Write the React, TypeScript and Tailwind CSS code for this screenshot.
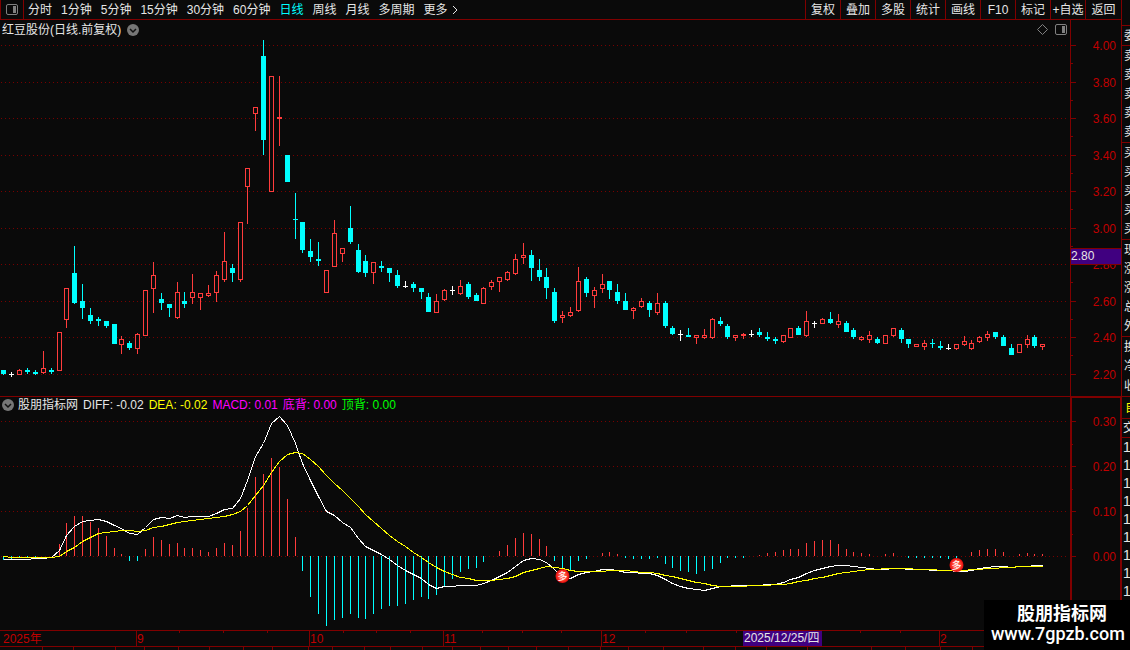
import * as React from "react";

type Tone = "up" | "down" | "flat";
type Candle = [tone: Tone, high: number, top: number, bottom: number, low: number];

const TONE_COLOR: Record<Tone, string> = {
  up: "#ff3c3c",
  down: "#00ffff",
  flat: "#ffffff",
};

const PERIODS = [
  "分时",
  "1分钟",
  "5分钟",
  "15分钟",
  "30分钟",
  "60分钟",
  "日线",
  "周线",
  "月线",
  "多周期",
];

const TOOLS = ["复权", "叠加", "多股", "统计", "画线", "F10", "标记", "+自选", "返回"];

// Drawn position of each trading day: tone, high, body top, body bottom, low.
const CANDLES: Candle[] = [
  ["down", 370, 370, 374, 375],
  ["flat", 372, 374, 375, 377],
  ["up", 369, 370, 375, 375],
  ["down", 368, 370, 372, 374],
  ["down", 370, 372, 374, 375],
  ["up", 351, 368, 373, 374],
  ["down", 368, 370, 372, 374],
  ["up", 332, 332, 371, 371],
  ["up", 288, 288, 320, 328],
  ["down", 246, 273, 303, 304],
  ["down", 284, 301, 308, 319],
  ["down", 308, 315, 321, 324],
  ["down", 317, 319, 321, 326],
  ["down", 321, 321, 326, 328],
  ["down", 324, 324, 344, 344],
  ["up", 336, 339, 345, 354],
  ["down", 341, 343, 348, 350],
  ["up", 333, 334, 349, 354],
  ["up", 290, 290, 336, 336],
  ["up", 262, 275, 289, 313],
  ["down", 293, 299, 303, 310],
  ["down", 304, 304, 308, 317],
  ["up", 282, 292, 318, 319],
  ["down", 292, 301, 304, 308],
  ["up", 274, 292, 298, 304],
  ["up", 293, 293, 298, 310],
  ["up", 285, 293, 296, 297],
  ["up", 271, 275, 293, 302],
  ["up", 232, 261, 280, 282],
  ["down", 264, 268, 273, 282],
  ["up", 222, 222, 280, 282],
  ["up", 168, 168, 187, 224],
  ["up", 107, 107, 114, 131],
  ["down", 40, 56, 140, 155],
  ["up", 76, 76, 192, 192],
  ["up", 76, 117, 119, 146],
  ["down", 155, 155, 182, 182],
  ["down", 193, 219, 220, 239],
  ["down", 222, 222, 250, 253],
  ["down", 239, 251, 257, 262],
  ["down", 242, 259, 261, 266],
  ["up", 270, 270, 293, 293],
  ["up", 220, 233, 267, 267],
  ["up", 248, 248, 254, 262],
  ["down", 206, 228, 242, 244],
  ["down", 244, 250, 272, 273],
  ["down", 255, 261, 273, 277],
  ["up", 262, 262, 273, 284],
  ["down", 261, 266, 268, 272],
  ["down", 268, 268, 273, 282],
  ["down", 270, 275, 286, 288],
  ["flat", 281, 286, 287, 288],
  ["down", 282, 284, 288, 292],
  ["down", 288, 288, 292, 299],
  ["down", 293, 297, 312, 312],
  ["up", 294, 301, 313, 313],
  ["up", 289, 290, 300, 301],
  ["flat", 286, 290, 291, 295],
  ["up", 280, 286, 294, 295],
  ["down", 282, 284, 297, 299],
  ["down", 293, 295, 301, 301],
  ["up", 287, 288, 304, 304],
  ["up", 280, 282, 287, 290],
  ["up", 277, 277, 282, 292],
  ["up", 271, 272, 280, 281],
  ["up", 254, 259, 274, 275],
  ["up", 243, 255, 258, 264],
  ["down", 250, 255, 268, 281],
  ["down", 259, 270, 277, 281],
  ["down", 268, 277, 288, 299],
  ["down", 288, 292, 321, 323],
  ["up", 311, 315, 318, 323],
  ["up", 307, 312, 316, 317],
  ["up", 267, 281, 311, 312],
  ["down", 277, 279, 293, 297],
  ["up", 287, 290, 296, 308],
  ["up", 274, 284, 289, 293],
  ["down", 281, 281, 290, 299],
  ["down", 284, 292, 301, 304],
  ["down", 293, 301, 310, 310],
  ["up", 307, 308, 311, 319],
  ["up", 298, 301, 307, 308],
  ["down", 301, 303, 310, 317],
  ["up", 293, 303, 313, 315],
  ["down", 301, 303, 326, 328],
  ["down", 326, 328, 334, 335],
  ["flat", 330, 334, 335, 341],
  ["down", 328, 335, 337, 337],
  ["up", 335, 335, 338, 344],
  ["up", 329, 335, 338, 339],
  ["up", 318, 319, 338, 339],
  ["down", 317, 321, 324, 326],
  ["down", 324, 326, 337, 339],
  ["up", 335, 335, 338, 341],
  ["up", 333, 334, 336, 339],
  ["flat", 330, 334, 335, 337],
  ["down", 328, 332, 335, 337],
  ["down", 332, 337, 339, 341],
  ["down", 337, 339, 341, 344],
  ["up", 335, 335, 342, 343],
  ["up", 328, 328, 338, 338],
  ["down", 326, 328, 335, 335],
  ["up", 311, 321, 336, 337],
  ["flat", 321, 323, 324, 328],
  ["up", 318, 319, 324, 324],
  ["down", 312, 319, 323, 324],
  ["up", 314, 321, 325, 328],
  ["down", 321, 323, 332, 332],
  ["down", 328, 330, 337, 339],
  ["up", 336, 337, 340, 341],
  ["up", 331, 335, 340, 343],
  ["down", 337, 339, 343, 344],
  ["up", 335, 335, 344, 344],
  ["up", 328, 328, 336, 337],
  ["down", 328, 330, 339, 343],
  ["down", 339, 339, 344, 348],
  ["up", 344, 344, 347, 347],
  ["up", 340, 343, 347, 350],
  ["down", 339, 343, 344, 348],
  ["down", 341, 346, 348, 350],
  ["flat", 344, 348, 349, 350],
  ["up", 344, 344, 349, 350],
  ["up", 336, 341, 345, 346],
  ["up", 340, 343, 349, 350],
  ["up", 336, 337, 342, 343],
  ["up", 331, 334, 338, 341],
  ["down", 332, 332, 337, 339],
  ["down", 335, 337, 346, 346],
  ["down", 344, 348, 355, 355],
  ["up", 344, 344, 353, 353],
  ["up", 335, 339, 345, 348],
  ["down", 335, 337, 346, 348],
  ["up", 344, 344, 347, 350],
];

const ZERO_Y = 556;

// End of each histogram bar; above ZERO_Y is positive.
const HISTOGRAM = [
  560, 559, 558, 558, 558, 556, 556, 544, 523, 516, 516, 522, 528, 536, 548, 554,
  561, 561, 549, 537, 540, 544, 543, 548, 548, 550, 552, 548, 543, 545, 531, 508,
  477, 474, 458, 467, 499, 537, 571, 597, 614, 626, 620, 618, 614, 618, 619, 614,
  609, 606, 606, 604, 600, 597, 599, 595, 587, 579, 572, 569, 568, 562, 556, 551,
  545, 538, 533, 534, 539, 546, 561, 568, 571, 561, 559, 556, 553, 552, 554, 558,
  559, 559, 559, 558, 564, 568, 571, 572, 574, 571, 569, 563, 558, 558, 558, 556,
  555, 553, 552, 550, 549, 549, 543, 541, 540, 540, 544, 549, 552, 553, 554, 556,
  554, 553, 556, 558, 558, 558, 558, 558, 559, 558, 556, 552, 550, 549, 549, 552,
  556, 554, 553, 554, 554,
];

const DIFF = [
  559, 559, 559, 559, 558, 558, 557, 550, 535, 526, 521, 520, 519, 521, 525, 528,
  533, 534, 527, 519, 517, 518, 515, 517, 516, 516, 516, 513, 509, 508, 498, 480,
  456, 443, 423, 416, 425, 443, 463, 480, 496, 511, 515, 522, 527, 538, 546, 550,
  554, 559, 565, 570, 574, 578, 584, 588, 586, 586, 585, 585, 585, 583, 580, 576,
  572, 566, 560, 558, 559, 562, 569, 577, 578, 574, 572, 571, 569, 569, 570, 572,
  572, 573, 573, 575, 579, 583, 586, 588, 589, 590, 588, 586, 586, 585, 585, 585,
  585, 584, 584, 582, 579, 577, 573, 570, 568, 566, 565, 565, 566, 567, 568, 569,
  569, 568, 568, 569, 569, 569, 570, 570, 570, 571, 571, 570, 568, 567, 566, 566,
  567, 566, 566, 565, 565,
];

const DEA = [
  556, 557, 557, 557, 557, 557, 557, 556, 551, 547, 541, 537, 533, 532, 531, 530,
  530, 531, 530, 527, 526, 524, 522, 521, 520, 519, 518, 517, 516, 514, 511, 505,
  495, 485, 472, 461, 454, 452, 453, 459, 466, 475, 483, 490, 498, 506, 514, 521,
  528, 535, 541, 546, 552, 557, 562, 567, 571, 574, 577, 578, 580, 580, 580, 579,
  578, 576, 572, 570, 568, 566, 567, 568, 570, 571, 571, 571, 571, 570, 570, 570,
  571, 572, 572, 573, 575, 576, 578, 580, 582, 583, 585, 586, 586, 586, 586, 585,
  585, 585, 584, 584, 583, 581, 580, 578, 577, 575, 573, 572, 571, 570, 569, 569,
  568, 568, 568, 568, 569, 569, 569, 570, 570, 570, 570, 569, 569, 568, 568, 567,
  567, 566, 566, 566, 566,
];

const PRICE_TICKS: [string, number][] = [
  ["4.00", 45],
  ["3.80", 82],
  ["3.60", 118],
  ["3.40", 155],
  ["3.20", 191],
  ["3.00", 228],
  ["2.80", 264],
  ["2.60", 301],
  ["2.40", 337],
  ["2.20", 374],
];

const MACD_TICKS: [string, number][] = [
  ["0.30", 421],
  ["0.20", 466],
  ["0.10", 511],
  ["0.00", 556],
];

const MONTHS: [string, number][] = [
  ["9", 136],
  ["10", 309],
  ["11", 443],
  ["12", 601],
  ["2", 939],
];
const WEEK_TICKS = [179, 223, 267, 343, 376, 410, 482, 522, 561, 645, 686, 736, 860, 900];
const TAB_TICKS = [
  42, 73, 115, 144, 178, 209, 243, 272, 308, 332, 364, 390, 422, 452, 480, 508, 536,
  568, 600, 628, 663, 703, 735, 766, 807, 871, 905, 940, 972,
];

const SIGNALS = [
  { x: 562, y: 576 },
  { x: 956, y: 565 },
];

const QUOTE_GROUPS = [
  { rows: ["委"], className: "h-5 pt-px" },
  { rows: ["卖", "卖", "卖", "卖", "卖"], className: "h-[97px]" },
  { rows: ["买", "买", "买", "买", "买"], className: "h-[97px]" },
  { rows: ["现", "涨", "涨", "总", "外"], className: "h-[97px]" },
  { rows: ["换", "净", "收"], className: "h-[60px]" },
];

function dayX(index: number) {
  return Math.floor(3.92 + index * 7.87);
}

function toPoints(values: number[]) {
  return values.map((y, i) => `${dayX(i) + 0.5},${y + 0.5}`).join(" ");
}

function GridLines({ ticks }: { ticks: [string, number][] }) {
  return (
    <g stroke="#780000" strokeDasharray="1 3">
      {ticks.map(([label, y]) => (
        <line key={label} x1="1" x2="1068" y1={y + 0.5} y2={y + 0.5} />
      ))}
    </g>
  );
}

function AxisTicks({ ticks, step }: { ticks: [string, number][]; step: number }) {
  return (
    <>
      {ticks.map(([label, y], i) => (
        <g key={label}>
          <rect x="0" y={y} width="5" height="1" fill="#800000" />
          {i < ticks.length - 1 ? (
            <rect x="0" y={y + step} width="2" height="1" fill="#800000" />
          ) : null}
          <text x="45" y={y + 5} textAnchor="end" fontSize="12" fill="#c00000">
            {label}
          </text>
        </g>
      ))}
    </>
  );
}

function PanelIcon({ className }: { className?: string }) {
  return (
    <svg viewBox="0 0 12 11" className={className} fill="none" aria-hidden="true">
      <rect x="0.5" y="0.5" width="11" height="10" rx="1.5" stroke="#808080" />
      <rect x="7" y="2" width="3" height="7" fill="#808080" />
    </svg>
  );
}

function CollapseButton({ label }: { label: string }) {
  return (
    <button type="button" aria-label={label} className="block h-3 w-3">
      <svg viewBox="0 0 12 12" className="h-3 w-3" aria-hidden="true">
        <circle cx="6" cy="6" r="6" fill="#767676" />
        <path d="M3 5l3 3 3-3" fill="none" stroke="#111" strokeWidth="1.5" />
      </svg>
    </button>
  );
}

function TopBar() {
  const [period, setPeriod] = React.useState("日线");

  return (
    <header className="flex h-5 items-stretch border-b border-[#800000]">
      <button
        type="button"
        aria-label="切换面板"
        className="flex w-6 items-center justify-center border-x border-[#800000]"
      >
        <PanelIcon className="h-[11px] w-3" />
      </button>
      <nav className="flex flex-1 items-center gap-[9px] whitespace-nowrap pl-1">
        {PERIODS.map((name) => (
          <button
            key={name}
            type="button"
            aria-pressed={name === period}
            onClick={() => setPeriod(name)}
            className={name === period ? "text-[#00ffff]" : "text-[#e6e6e6]"}
          >
            {name}
          </button>
        ))}
        <button type="button" className="flex items-center gap-1 text-[#e6e6e6]">
          更多
          <svg viewBox="0 0 6 10" className="h-[10px] w-[6px]" aria-hidden="true">
            <path d="M1 1l4 4-4 4" fill="none" stroke="#e6e6e6" />
          </svg>
        </button>
      </nav>
      <div className="flex whitespace-nowrap">
        {TOOLS.map((name) => (
          <button
            key={name}
            type="button"
            className="w-[35px] border-l border-[#800000] text-center text-[#e6e6e6] last:w-9"
          >
            {name}
          </button>
        ))}
      </div>
    </header>
  );
}

function PriceChart() {
  return (
    <section aria-label="红豆股份日线" className="flex h-[377px] border-b border-[#800000]">
      <div className="relative min-w-0 flex-1">
        <svg
          viewBox="0 20 1070 376"
          preserveAspectRatio="none"
          className="block h-[376px] w-full"
          shapeRendering="crispEdges"
          aria-hidden="true"
        >
          <GridLines ticks={PRICE_TICKS} />
          {CANDLES.map(([tone, high, top, bottom, low], i) => {
            const x = dayX(i);
            const color = TONE_COLOR[tone];
            return (
              <g key={i} fill={color}>
                <rect x={x} y={high} width="1" height={low - high} />
                {tone === "up" && bottom - top > 2 ? (
                  <rect
                    x={x - 1.5}
                    y={top + 0.5}
                    width="4"
                    height={bottom - top - 1}
                    fill="#0a0a0a"
                    stroke={color}
                  />
                ) : (
                  <rect x={x - 2} y={top} width="5" height={bottom - top} />
                )}
              </g>
            );
          })}
        </svg>
        <div className="absolute inset-x-0 top-0 flex h-[19px] items-center gap-[6px] pl-[2px] pr-[3px] text-[#e6e6e6]">
          <h1>红豆股份(日线.前复权)</h1>
          <CollapseButton label="收起主图" />
          <svg viewBox="0 0 11 11" className="ml-auto h-[11px] w-[11px]" aria-hidden="true">
            <path d="M5.5 0.5l5 5-5 5-5-5z" fill="none" stroke="#808080" />
          </svg>
          <PanelIcon className="ml-px h-[11px] w-3" />
        </div>
      </div>
      <div className="relative w-[51px] border-l border-[#800000]">
        <svg viewBox="0 20 50 376" className="block h-[376px] w-[50px]">
          <AxisTicks ticks={PRICE_TICKS} step={18} />
        </svg>
        <div className="absolute -left-px -right-px top-[228px] h-[17px] border border-[#800000] bg-[#400080] leading-[15px] text-[#e6e6e6]">
          2.80
        </div>
      </div>
    </section>
  );
}

function MacdChart() {
  return (
    <section aria-label="MACD" className="flex h-[233px]">
      <div className="relative min-w-0 flex-1">
        <svg
          viewBox="0 397 1070 233"
          preserveAspectRatio="none"
          className="block h-[233px] w-full"
        >
          <defs>
            <radialGradient id="signal">
              <stop offset="0" stopColor="#ff8070" />
              <stop offset="0.6" stopColor="#ff4030" />
              <stop offset="1" stopColor="#e00808" />
            </radialGradient>
          </defs>
          <g shapeRendering="crispEdges">
            <GridLines ticks={MACD_TICKS} />
            {HISTOGRAM.map((end, i) => (
              <rect
                key={i}
                x={dayX(i)}
                y={Math.min(end, ZERO_Y)}
                width="1"
                height={Math.abs(end - ZERO_Y)}
                fill={end < ZERO_Y ? "#ff3c3c" : "#00ffff"}
              />
            ))}
            <polyline points={toPoints(DIFF)} fill="none" stroke="#ffffff" />
            <polyline points={toPoints(DEA)} fill="none" stroke="#ffff00" />
          </g>
          {SIGNALS.map(({ x, y }) => (
            <g key={x}>
              <circle cx={x + 0.5} cy={y} r="7" fill="url(#signal)" />
              <text x={x + 0.5} y={y + 4} textAnchor="middle" fontSize="10" fill="#fff">
                多
              </text>
            </g>
          ))}
        </svg>
        <div className="absolute left-0 top-0 flex h-4 items-center gap-[5px] whitespace-nowrap pl-[2px] text-[#e6e6e6]">
          <div className="flex items-center gap-[4px]">
            <CollapseButton label="收起副图" />
            <h2>股朋指标网</h2>
          </div>
          <span>DIFF: -0.02</span>
          <span className="text-[#ffff00]">DEA: -0.02</span>
          <span className="text-[#ff00ff]">MACD: 0.01</span>
          <span className="text-[#ff00ff]">底背: 0.00</span>
          <span className="text-[#00ff00]">顶背: 0.00</span>
        </div>
      </div>
      <div className="w-[51px] border-l-2 border-r border-t border-[#800000]">
        <svg viewBox="1 398 48 232" className="block h-[232px] w-12">
          <AxisTicks ticks={MACD_TICKS} step={23} />
        </svg>
      </div>
    </section>
  );
}

function DateAxis() {
  return (
    <div className="relative h-5 border-t border-[#800000]">
      <svg
        viewBox="0 631 1130 19"
        preserveAspectRatio="none"
        className="block h-[19px] w-full"
      >
        <g fill="#800000">
          <rect x="0" y="646" width="1130" height="1" />
          {MONTHS.map(([label, x]) => (
            <rect key={label} x={x} y="631" width="1" height="15" />
          ))}
          {WEEK_TICKS.map((x) => (
            <rect key={x} x={x} y="631" width="1" height="2" />
          ))}
          {TAB_TICKS.map((x) => (
            <rect key={x} x={x} y="647" width="1" height="3" />
          ))}
        </g>
        <g fontSize="12" fill="#c00000">
          <text x="3" y="643">
            2025年
          </text>
          {MONTHS.map(([label, x]) => (
            <text key={label} x={x + 1} y="643">
              {label}
            </text>
          ))}
        </g>
      </svg>
      <time
        dateTime="2025-12-25"
        className="absolute left-[743px] top-0 h-[15px] w-[79px] whitespace-nowrap bg-[#400080] pl-px leading-[15px] text-[#e6e6e6]"
      >
        2025/12/25/四
      </time>
    </div>
  );
}

// Quote board that runs off the right side of the window.
function QuoteStrip() {
  return (
    <aside className="w-[9px] shrink-0 overflow-hidden border-l border-[#800000] pt-[25px] text-[#e6e6e6]">
      {QUOTE_GROUPS.map(({ rows, className }) => (
        <div
          key={rows[0]}
          className={`flex flex-col justify-around border-t border-[#800000] pl-[2px] ${className}`}
        >
          {rows.map((row, i) => (
            <span key={i} className="block w-4 leading-4">
              {row}
            </span>
          ))}
        </div>
      ))}
      <div className="h-[22px] border-t border-[#800000] pl-[3px] leading-[22px]">
        <span className="block w-4 text-[#ffff00]">自</span>
      </div>
      <div className="h-[20px] border-y border-[#800000] pl-px leading-[18px]">
        <span className="block w-4">交</span>
      </div>
      {Array.from({ length: 9 }, (_, i) => (
        <div key={i} className="h-[18px] pl-px text-sm leading-[18px]">
          1
        </div>
      ))}
    </aside>
  );
}

export default function App() {
  return (
    <main className="relative min-h-screen overflow-hidden bg-[#0a0a0a] font-['Liberation_Sans','Noto_Sans_CJK_SC',sans-serif] text-xs">
      <div className="flex h-[630px]">
        <div className="min-w-0 flex-1">
          <TopBar />
          <PriceChart />
          <MacdChart />
        </div>
        <QuoteStrip />
      </div>
      <DateAxis />
      <div className="absolute bottom-0 right-0 h-[50px] w-[146px] whitespace-nowrap bg-black pt-1 text-white">
        <strong className="block pl-[33px] text-lg leading-5">股朋指标网</strong>
        <span className="block pl-[7px] font-['Roboto',sans-serif] text-lg font-medium leading-5">
          www.7gpzb.com
        </span>
      </div>
    </main>
  );
}
